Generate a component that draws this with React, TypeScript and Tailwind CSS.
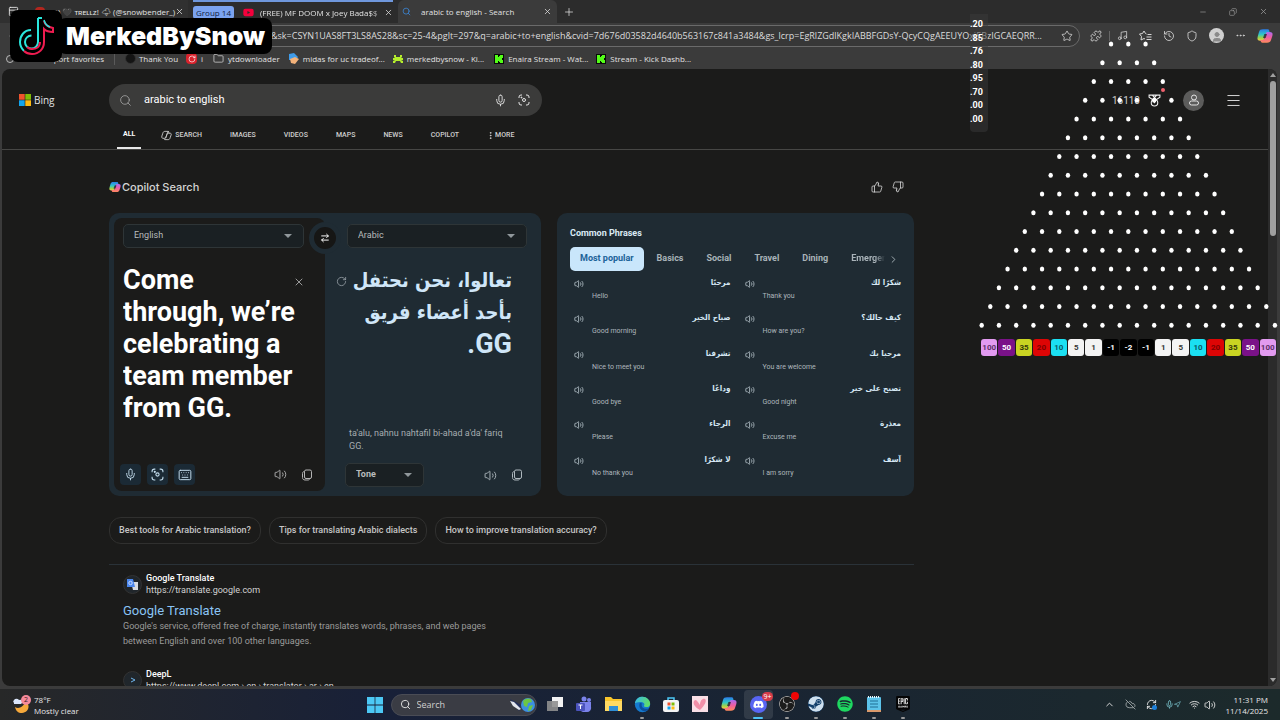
import classNames from 'clsx';
import {
  ArrowLeft,
  ArrowRightLeft,
  ChevronRight,
  ChevronUp,
  CloudOff,
  Copy,
  EllipsisVertical,
  Ellipsis,
  Folder,
  History,
  Keyboard,
  Menu,
  Mic,
  Minus,
  Music,
  Navigation,
  PanelTop,
  Plus,
  Puzzle,
  RefreshCw,
  RotateCw,
  Search,
  Shield,
  Star,
  ThumbsDown,
  ThumbsUp,
  User,
  Volume2,
  Wifi,
  X,
} from 'lucide-react';
import { FC, ReactNode } from 'react';
import { FaDiscord, FaSpotify, FaSteam, FaYoutube } from 'react-icons/fa';
import { SiEpicgames, SiObsstudio } from 'react-icons/si';

const URL_TEXT =
  '&sk=CSYN1UAS8FT3LS8AS28&sc=25-4&pglt=297&q=arabic+to+english&cvid=7d676d03582d4640b563167c841a3484&gs_lcrp=EgRlZGdlKgkIABBFGDsY-QcyCQgAEEUYOxi5BzIGCAEQRR...';

const navItems = ['IMAGES', 'VIDEOS', 'MAPS', 'NEWS', 'COPILOT'];

const categories = ['Basics', 'Social', 'Travel', 'Dining'];

const phrases = [
  { en: 'Hello', ar: 'مرحبًا' },
  { en: 'Thank you', ar: 'شكرًا لك' },
  { en: 'Good morning', ar: 'صباح الخير' },
  { en: 'How are you?', ar: 'كيف حالك؟' },
  { en: 'Nice to meet you', ar: 'تشرفنا' },
  { en: 'You are welcome', ar: 'مرحبا بك' },
  { en: 'Good bye', ar: 'وداعًا' },
  { en: 'Good night', ar: 'تصبح على خير' },
  { en: 'Please', ar: 'الرجاء' },
  { en: 'Excuse me', ar: 'معذرة' },
  { en: 'No thank you', ar: 'لا شكرًا' },
  { en: 'I am sorry', ar: 'آسف' },
];

const suggestions = [
  'Best tools for Arabic translation?',
  'Tips for translating Arabic dialects',
  'How to improve translation accuracy?',
];

const odds = ['.20', '.85', '.76', '.80', '.95', '.70', '.00', '.00'];

const bins = [
  { value: '100', style: 'bg-[#e29af0] text-[#5d2f68]' },
  { value: '50', style: 'bg-[#7a1288] text-white' },
  { value: '35', style: 'bg-[#c9d422] text-[#33380a]' },
  { value: '20', style: 'bg-[#dd0505] text-[#7c0000]' },
  { value: '10', style: 'bg-[#1be0f2] text-[#0b5a66]' },
  { value: '5', style: 'bg-[#f3f3f3] text-[#333]' },
  { value: '1', style: 'bg-[#f3f3f3] text-[#333]' },
  { value: '-1', style: 'bg-black text-white' },
  { value: '-2', style: 'bg-black text-white' },
  { value: '-1', style: 'bg-black text-white' },
  { value: '1', style: 'bg-[#f3f3f3] text-[#333]' },
  { value: '5', style: 'bg-[#f3f3f3] text-[#333]' },
  { value: '10', style: 'bg-[#1be0f2] text-[#0b5a66]' },
  { value: '20', style: 'bg-[#dd0505] text-[#7c0000]' },
  { value: '35', style: 'bg-[#c9d422] text-[#33380a]' },
  { value: '50', style: 'bg-[#7a1288] text-white' },
  { value: '100', style: 'bg-[#e29af0] text-[#5d2f68]' },
];

const CopilotLogo: FC<{ size: number; id: string }> = ({ size, id }) => (
  <svg width={size} height={size} viewBox="0 0 24 24">
    <defs>
      <linearGradient id={`${id}-a`} x1="0" y1="0" x2="0" y2="1">
        <stop offset="0" stopColor="#2b7de9" />
        <stop offset="0.45" stopColor="#2fc6c9" />
        <stop offset="0.75" stopColor="#9bd34a" />
        <stop offset="1" stopColor="#f7c948" />
      </linearGradient>
      <linearGradient id={`${id}-b`} x1="0" y1="0" x2="0" y2="1">
        <stop offset="0" stopColor="#a86bf2" />
        <stop offset="0.5" stopColor="#ef5da0" />
        <stop offset="1" stopColor="#ff8a5c" />
      </linearGradient>
    </defs>
    <path
      d="M9 2h7c1.500 0 2 1 2.500 2.500L19 7h-3c-2 0-3 1-3.500 3l-2 7c-.5 1.500-1 2-2.500 2H5c-4 0-5-2-4-6l2-7c.8-3 2.500-4 6-4z"
      fill={`url(#${id}-a)`}
    />
    <path
      d="M15 22H8c-1.500 0-2-1-2.500-2.500L5 18h3c2 0 3-1 3.500-3l2-7c.5-1.500 1-2 2.500-2h3c4 0 5 2 4 6l-2 6c-.8 3-2.500 4-6 4z"
      fill={`url(#${id}-b)`}
    />
    <path d="M11 9h4l-2 6H9z" fill="#23232b" fillOpacity="0.75" />
  </svg>
);

const CopilotOutline = () => (
  <svg width="11" height="11" viewBox="0 0 24 24" fill="none" stroke="#c8c8c8" strokeWidth="2">
    <path d="M9 3h7l2 5M9 3C6 3 5 4 4 7l-2 6c-1 4 0 5 3 5h3c2 0 2.500-1 3-3l3-9c.5-2 1-3 3-3" />
    <path d="M15 21H8l-2-3M15 21c3 0 4-1 5-4l2-6c1-3 0-4-3-4h-3c-2 0-2.500 1-3 3l-3 8" />
  </svg>
);

const LensIcon: FC<{ size: number }> = ({ size }) => (
  <svg width={size} height={size} viewBox="0 0 24 24" fill="none" stroke="currentColor" strokeWidth="2">
    <path d="M2 8V6a4 4 0 0 1 4-4h2M16 2h2a4 4 0 0 1 4 4v2M22 16v2a4 4 0 0 1-4 4h-2M8 22H6a4 4 0 0 1-4-4v-2" />
    <circle cx="12" cy="12" r="3" />
    <circle cx="7" cy="7" r="1" fill="currentColor" />
  </svg>
);

const CopyPages = () => (
  <svg width="12" height="12" viewBox="0 0 24 24" fill="none" stroke="currentColor" strokeWidth="2">
    <rect x="7" y="2" width="14" height="17" rx="3" />
    <path d="M7 5C4.500 5 3 6.500 3 9v8c0 3 2 5 5 5h6c2 0 3-1 4-3" />
  </svg>
);

const Person = () => (
  <svg width="12" height="12" viewBox="0 0 24 24" fill="none" stroke="currentColor" strokeWidth="2">
    <circle cx="12" cy="7" r="5" />
    <rect x="3" y="14" width="18" height="8" rx="4" />
  </svg>
);

const CollectionsStar = () => (
  <svg width="13" height="12" viewBox="0 0 26 24" fill="none" stroke="currentColor" strokeWidth="2">
    <path d="M15 8l-2-1-3-5-3 5-6 1 4 5-1 7 6-3 2 1M17 9h8M15 14h10M15 19h10" />
  </svg>
);

const Medal = () => (
  <svg width="13" height="13" viewBox="0 0 24 24" fill="none" stroke="#f0f0f0" strokeWidth="2">
    <path d="M2 2h20v4l-6 4H8L2 6zM8 2l7 8M16 2L9 10" />
    <circle cx="12" cy="16" r="6" />
    <path d="M12 13v4" />
  </svg>
);

const KickLogo = () => (
  <svg width="10" height="10" viewBox="0 0 10 10">
    <rect width="10" height="10" fill="#0a0a0a" />
    <path d="M1 1h3v2h1V2h1V1h3v3H8v2h1v3H6V8H5V7H4v2H1z" fill="#53fc18" />
  </svg>
);

const Alien = () => (
  <svg width="10" height="10" viewBox="0 0 10 10" fill="#b5ee2c">
    <path d="M1 1h2v2h4V1h2v2L8 4h2v2H8l2 1v2H8L7 7H3L2 9H0V7l2-1H0V4h2L1 3z" />
  </svg>
);

const TikTokLogo = () => (
  <svg width="36" height="40" viewBox="0 0 36 40" fill="none">
    <path
      d="M20 2v24a6.500 6.500 0 1 1-6.500-6.500M20 2h4"
      stroke="#29e6dd"
      strokeWidth="2"
    />
    <path d="M13 14C6 14 2 20 2 26c0 4 1 6 4 9" stroke="#29e6dd" strokeWidth="2" />
    <path d="M26 5c1 4 4 6 9 7v4c-4 0-7-1-9-3v13c0 7-5 12-12 12-3 0-6-1-8-3" stroke="#f01c50" strokeWidth="2" />
    <path d="M22 26c0 5-4 7-8 7-2 0-4-1-5-2" stroke="#f01c50" strokeWidth="2" />
    <path d="M26 4c1 4 3 6 6 7" stroke="#29e6dd" strokeWidth="1.500" />
  </svg>
);

const Weather = () => (
  <svg width="18" height="20" viewBox="0 0 18 20">
    <path d="M3 12c3 2 8 1 11-6 5 5 2 12-4 12-4 0-6-2-7-6z" fill="#f6a93b" />
    <path d="M2 8a2 2 0 0 1 0-3 3 3 0 0 1 5 0 2 2 0 0 1 2 4H2z" fill="#dbe6fb" />
  </svg>
);

const EdgeLogo = () => (
  <svg width="17" height="17" viewBox="0 0 20 20">
    <defs>
      <linearGradient id="edge" x1="0" y1="0" x2="1" y2="0.3">
        <stop offset="0" stopColor="#35b8f0" />
        <stop offset="1" stopColor="#5fdc6c" />
      </linearGradient>
    </defs>
    <circle cx="10" cy="10" r="9" fill="#1579ce" />
    <path d="M1 9C2 3 6 1 10 1c5 0 9 4 9 8 0 3-2 4-5 4-2 0-3-1-2-2 1-2-1-4-4-4-4 0-6 1-7 2z" fill="url(#edge)" />
    <path d="M7 8c-2 4 0 9 5 10 3 0 5-2 6-4-4 2-9 1-9-3 0-1 0-2 1-2z" fill="#0c4f9c" />
  </svg>
);

const WindowsLogo = () => (
  <svg width="16" height="16" viewBox="0 0 16 16" fill="#4cc8f5">
    <path d="M0 0h7.600v7.600H0zM8.400 0H16v7.600H8.400zM0 8.400h7.600V16H0zM8.400 8.400H16V16H8.400z" />
  </svg>
);

const FourSquares: FC<{ size: number }> = ({ size }) => (
  <svg width={size} height={size} viewBox="0 0 12 12">
    <path d="M0 0h5.700v5.700H0z" fill="#f0532d" />
    <path d="M6.300 0H12v5.700H6.300z" fill="#80bc06" />
    <path d="M0 6.300h5.700V12H0z" fill="#12a5ee" />
    <path d="M6.300 6.300H12V12H6.300z" fill="#fdba12" />
  </svg>
);

const SearchArt = () => (
  <svg width="28" height="18" viewBox="0 0 28 18">
    <path d="M2 3l11 6-2 6z" fill="#23305c" />
    <path d="M2 5l4 1 7 7-2 1-6-4z" fill="#e3e6ee" />
    <circle cx="20" cy="9" r="7" fill="#3d8fe0" />
    <path d="M15 5c2-3 6-3 8-2l1 3-4 1-1 4-3-1zM21 10l4-1-2 5-3 1z" fill="#6cc644" />
  </svg>
);

const TrayMicLocation = () => (
  <span className="flex items-center text-[#7cc5cf]">
    <Mic size={9} />
    <Navigation size={7} />
  </span>
);

const ChromeBar: FC = () => (
  <header className="bg-[#3b3b3b] font-['Open_Sans',sans-serif] text-[8px] text-[#e2e2e2]">
    <div className="flex h-[23px] items-stretch bg-[#2c2c2c]">
      <div className="flex w-[188px] items-center bg-[#303030] pl-2">
        <PanelTop size={11} className="mr-4 shrink-0" />
        <span className="h-2.5 w-2.5 shrink-0 rounded-sm bg-[#b3261e]" />
        <span className="ml-1.5 flex-1 whitespace-nowrap">(4) 🖤 ᴛʀᴇʟʟᴢ! 🌩 (@snowbender_)</span>
        <button aria-label="Close tab" className="mr-1">
          <X size={9} />
        </button>
      </div>
      <div className="ml-[5px] flex w-[200px] items-center border-t-2 border-[#6f97dc]">
        <button className="h-[13px] w-[41px] whitespace-nowrap rounded-[3px] bg-[#7ba3ef] leading-[13px] text-[#10203f]">
          Group 14
        </button>
        <FaYoutube size={11} className="ml-[9px] shrink-0 text-[#f5003c]" />
        <span className="ml-1.5 flex-1 whitespace-nowrap mask-r-from-90%">(FREE) MF DOOM x Joey Bada$$</span>
        <button aria-label="Close tab">
          <X size={9} />
        </button>
      </div>
      <div className="ml-[5px] flex w-[159px] items-center rounded-t-md bg-[#3b3b3b] pl-1 pr-[5px]">
        <Search size={9} className="text-[#3b8be0]" />
        <span className="ml-2.5 flex-1 whitespace-nowrap">arabic to english - Search</span>
        <button aria-label="Close tab">
          <X size={9} />
        </button>
      </div>
      <button aria-label="New tab" className="ml-1.5">
        <Plus size={12} strokeWidth={1.500} />
      </button>
      <div className="ml-auto flex items-center gap-[22px] pr-3 text-[#9a9a9a]">
        <button aria-label="Minimize">
          <Minus size={8} />
        </button>
        <button aria-label="Restore">
          <Copy size={8} className="-scale-x-100" />
        </button>
        <button aria-label="Close">
          <X size={9} />
        </button>
      </div>
    </div>
    <div className="flex h-[25px] items-center pl-2 pr-[7px]">
      <button aria-label="Back">
        <ArrowLeft size={10} />
      </button>
      <div className="ml-[60px] flex h-[22px] flex-1 items-center rounded-full border border-[#6a6a6a] bg-[#373737] pl-[192px] pr-1.5">
        <input
          aria-label="Address"
          readOnly
          value={URL_TEXT}
          className="min-w-0 flex-1 bg-transparent text-[9px] text-[#dcdcdc] outline-none"
        />
        <Star size={12} strokeWidth={1.500} className="ml-2.5" />
      </div>
      <div className="ml-2.5 flex items-center gap-[11px] text-[#d6d6d6]">
        <Puzzle size={12} strokeWidth={1.700} />
        <span className="-mx-1 h-2.5 w-px bg-[#666]" />
        <Music size={11} strokeWidth={1.700} />
        <CollectionsStar />
        <History size={12} strokeWidth={1.700} />
        <Shield size={12} strokeWidth={1.700} />
        <span className="flex h-[15px] w-[15px] items-end justify-center overflow-hidden rounded-full bg-[#d0d0d0]">
          <User size={12} fill="#8a8a8a" stroke="#8a8a8a" />
        </span>
        <Ellipsis size={11} />
        <CopilotLogo size={16} id="toolbar" />
      </div>
    </div>
    <nav className="flex h-[21px] items-center whitespace-nowrap pl-1.5">
      <span className="h-2 w-2 rounded-full border border-[#bbb]" />
      <a href="#import" className="ml-[30px]">
        Import favorites
      </a>
      <span className="mx-2.5 h-3 w-px bg-[#5a5a5a]" />
      <a href="#thanks" className="flex items-center gap-[3px]">
        <span className="h-[11px] w-[11px] rounded-full border border-[#333] bg-[#141414]" />
        Thank You
      </a>
      <a href="#i" className="ml-2 flex items-center gap-1">
        <span className="flex h-[11px] w-[11px] items-center justify-center rounded-sm bg-[#d8222c] text-white">
          <RotateCw size={8} />
        </span>
        i
      </a>
      <a href="#yt" className="ml-2.5 flex items-center gap-1">
        <Folder size={11} strokeWidth={1.500} />
        ytdownloader
      </a>
      <a href="#midas" className="ml-2 flex items-center gap-1">
        <svg width="11" height="11" viewBox="0 0 11 11">
          <path d="M1 1l5-1 4 4-2 3-7 0z" fill="#3f9be8" />
          <path d="M2 6l5-2 4 2-4 5-4-1z" fill="#f3b27a" />
        </svg>
        midas for uc tradeof...
      </a>
      <a href="#merked" className="ml-2 flex items-center gap-1">
        <Alien />
        merkedbysnow - Ki...
      </a>
      <a href="#enaira" className="ml-2.5 flex items-center gap-1">
        <KickLogo />
        Enaira Stream - Wat...
      </a>
      <a href="#dash" className="ml-2 flex items-center gap-1">
        <KickLogo />
        Stream - Kick Dashb...
      </a>
    </nav>
  </header>
);

const BingHeader: FC = () => (
  <div className="border-b border-[#474745] pt-[15px]">
    <div className="flex items-center pl-[17px] pr-[26px]">
      <a href="#bing" className="flex w-[90px] items-center gap-[3px] font-['Open_Sans',sans-serif] text-[10px]">
        <FourSquares size={12} />
        Bing
      </a>
      <form className="flex h-8 w-[433px] items-center rounded-full bg-[#3b3b3a] pl-2.5 pr-3">
        <Search size={13} strokeWidth={1.500} className="text-[#a5a5a5]" />
        <input
          aria-label="Search"
          defaultValue="arabic to english"
          className="ml-3 min-w-0 flex-1 bg-transparent text-[11px] text-white outline-none"
        />
        <button type="button" aria-label="Voice search">
          <Mic size={13} strokeWidth={1.700} />
        </button>
        <button type="button" aria-label="Image search" className="ml-[11px]">
          <LensIcon size={12} />
        </button>
      </form>
      <div className="ml-auto flex items-center">
        <span className="text-[10px] text-[#d0d0d0]">16110</span>
        <span className="relative ml-2">
          <Medal />
          <span className="absolute -right-1 -top-1.5 h-1 w-1 rounded-full bg-[#f0616d]" />
        </span>
        <button
          aria-label="Account"
          className="ml-[22px] flex h-[21px] w-[21px] items-center justify-center rounded-full bg-[#5c5c5b]"
        >
          <Person />
        </button>
        <button aria-label="Menu" className="ml-[21px]">
          <Menu size={17} strokeWidth={1.300} />
        </button>
      </div>
    </div>
    <nav className="flex h-[33px] items-center gap-7 pl-[115px] text-[7px] font-medium text-[#cfcfcf]">
      <a
        href="#all"
        className="-mr-2 flex h-full items-center border-b-2 border-[#e8e8e8] px-1.5 pt-1.5 font-bold text-white"
      >
        ALL
      </a>
      <a href="#search" className="flex items-center gap-[3px] pt-[5px]">
        <CopilotOutline />
        SEARCH
      </a>
      {navItems.map((item) => (
        <a key={item} href="#nav" className="pt-[5px]">
          {item}
        </a>
      ))}
      <button className="-ml-px flex items-center pt-[5px]">
        <EllipsisVertical size={9} strokeWidth={2.500} />
        MORE
      </button>
    </nav>
  </div>
);

const LanguageSelect: FC<{ label: string; value: string; className: string }> = ({
  label,
  value,
  className,
}) => (
  <div className={classNames('relative text-[9px]', className)}>
    <select
      aria-label={label}
      className="h-6 w-full appearance-none rounded-[5px] border border-[#2e3537] bg-[#1a2023] px-2.5 text-[#b9bcbd] outline-none"
    >
      <option>{value}</option>
    </select>
    <svg width="8" height="4" viewBox="0 0 8 4" className="absolute right-3 top-2.5 fill-[#90979b]">
      <path d="M0 0h8L4 4z" />
    </svg>
  </div>
);

const ToolButton: FC<{ label: string; children: ReactNode }> = ({ label, children }) => (
  <button
    aria-label={label}
    className="flex h-[21px] w-[21px] items-center justify-center rounded bg-[#1b2a35] text-[#c3dcec]"
  >
    {children}
  </button>
);

const Translator: FC = () => (
  <section className="relative flex h-[283px] w-[432px] shrink-0 rounded-[10px] bg-[#1f2b33] p-[5px]">
    <div className="flex w-[211px] shrink-0 flex-col rounded-lg bg-[#1b1b1a] p-1.5">
      <LanguageSelect label="From" value="English" className="ml-[3px] w-[181px]" />
      <div className="ml-[3px] mt-4 flex flex-1 items-start">
        <textarea
          aria-label="Source text"
          readOnly
          className="h-full w-[174px] resize-none overflow-hidden bg-transparent text-[27px] font-bold leading-8 text-white outline-none"
          value="Come through, we’re celebrating a team member from GG."
        />
        <button aria-label="Clear" className="-ml-1 mt-3">
          <X size={12} strokeWidth={1.700} className="text-[#b0b0b0]" />
        </button>
      </div>
      <div className="flex items-center gap-1.5 pr-1.5 text-[#b4b4b4]">
        <ToolButton label="Speak">
          <Mic size={13} strokeWidth={1.700} />
        </ToolButton>
        <ToolButton label="Scan">
          <LensIcon size={13} />
        </ToolButton>
        <ToolButton label="Keyboard">
          <Keyboard size={14} strokeWidth={1.700} />
        </ToolButton>
        <button aria-label="Listen" className="ml-auto mr-2">
          <Volume2 size={13} strokeWidth={1.700} />
        </button>
        <button aria-label="Copy">
          <CopyPages />
        </button>
      </div>
    </div>
    <div className="flex min-w-0 flex-1 flex-col pb-1 pl-[11px] pr-1 pt-1.5">
      <LanguageSelect label="To" value="Arabic" className="ml-[11px] w-[180px]" />
      <div className="mt-4 flex flex-1 items-start pr-5">
        <button aria-label="Regenerate" className="mt-3">
          <RotateCw size={11} strokeWidth={1.700} className="text-[#9aa4aa]" />
        </button>
        <p
          dir="rtl"
          lang="ar"
          className="flex-1 whitespace-nowrap font-['DejaVu_Sans_Condensed','DejaVu_Sans',sans-serif] text-xl font-bold leading-8 text-[#cfe6f8]"
        >
          تعالوا، نحن نحتفل
          <br />
          بأحد أعضاء فريق
          <br />
          <span className="font-[Roboto,sans-serif] text-[27px]">GG.</span>
        </p>
      </div>
      <p className="mb-2.5 w-[170px] pl-[13px] text-[9px] leading-[13px] text-[#a6adb1]">
        ta'alu, nahnu nahtafil bi-ahad a'da' fariq GG.
      </p>
      <div className="flex items-center pl-[9px] pr-[9px] text-[#aeb8be]">
        <LanguageSelect label="Tone" value="Tone" className="w-[79px] font-bold" />
        <button aria-label="Listen" className="ml-auto mr-3.5">
          <Volume2 size={13} strokeWidth={1.700} />
        </button>
        <button aria-label="Copy">
          <CopyPages />
        </button>
      </div>
    </div>
    <button
      aria-label="Swap languages"
      className="absolute left-[200px] top-[9px] flex h-8 w-8 items-center justify-center rounded-full border-[5px] border-[#1f2b33] bg-[#161615] text-white"
    >
      <ArrowRightLeft size={10} strokeWidth={2.300} />
    </button>
  </section>
);

const CommonPhrases: FC = () => (
  <section className="flex h-[283px] w-[357px] flex-col rounded-[10px] bg-[#1f2b33] px-[13px] pt-3.5">
    <h2 className="text-[9px] font-bold leading-3 text-[#dbeaf5]">Common Phrases</h2>
    <div className="mt-2 flex h-6 items-center gap-[23px] text-[9px] font-bold text-[#a9b3b9]">
      <button className="-mr-2.5 h-full whitespace-nowrap rounded-[5px] bg-[#c9e6fb] px-2.5 text-[#1b6298]">
        Most popular
      </button>
      {categories.map((item) => (
        <button key={item}>{item}</button>
      ))}
      <button className="min-w-0 flex-1 overflow-hidden text-left mask-r-from-70%">Emergency</button>
      <button aria-label="More categories" className="-ml-5 mr-0.5">
        <ChevronRight size={11} />
      </button>
    </div>
    <ul className="mt-1 grid h-[212px] grid-cols-2 grid-rows-6 gap-x-2.5">
      {phrases.map((phrase) => (
        <li key={phrase.en} className="grid grid-cols-[22px_1fr] content-start pt-0.5">
          <button aria-label={`Listen to ${phrase.en}`} className="row-span-2 h-3.5 pl-1">
            <Volume2 size={10} className="text-[#b3c0c8]" />
          </button>
          <span
            dir="rtl"
            lang="ar"
            className="font-['DejaVu_Sans_Condensed','DejaVu_Sans',sans-serif] text-[8px] font-bold leading-3 text-[#d5e7f4]"
          >
            {phrase.ar}
          </span>
          <span className="text-[7px] leading-[15px] text-[#adb6bc]">{phrase.en}</span>
        </li>
      ))}
    </ul>
  </section>
);

const SiteHead: FC<{ name: string; url: string; icon: ReactNode }> = ({ name, url, icon }) => (
  <div className="flex items-center gap-1 text-[9px] leading-3 text-[#d2d2d2]">
    <span className="flex h-[19px] w-[19px] items-center justify-center rounded-full border border-[#333] bg-[#20262b]">
      {icon}
    </span>
    <div>
      <div className="font-medium text-white">{name}</div>
      <div>{url}</div>
    </div>
  </div>
);

const Results: FC = () => (
  <main className="ml-[107px] w-[805px] pt-[29px]">
    <div className="flex h-4 items-center gap-px">
      <CopilotLogo size={12} id="heading" />
      <h1 className="font-[Inter,sans-serif] text-[11px] font-medium text-[#d4d4d4]">Copilot Search</h1>
      <button aria-label="Like" className="ml-auto">
        <ThumbsUp size={12} strokeWidth={1.500} />
      </button>
      <button aria-label="Dislike" className="ml-2 mr-2.5">
        <ThumbsDown size={12} strokeWidth={1.500} />
      </button>
    </div>
    <div className="mt-[18px] flex gap-4">
      <Translator />
      <CommonPhrases />
    </div>
    <div className="mt-[21px] flex gap-2">
      {suggestions.map((text) => (
        <button
          key={text}
          className="h-[27px] whitespace-nowrap rounded-xl border border-[#30302f] px-[9px] text-[9px] font-medium text-[#c6c6c6]"
        >
          {text}
        </button>
      ))}
    </div>
    <ol className="mt-5 border-t border-[#2a3238] pl-3.5 pt-[7px]">
      <li>
        <SiteHead
          name="Google Translate"
          url="https://translate.google.com"
          icon={
            <svg width="11" height="11" viewBox="0 0 11 11">
              <path d="M4 3h7v8H6z" fill="#d7dbe2" />
              <path d="M0 0h6l2 8H0z" fill="#4a86ee" />
              <circle cx="3.500" cy="4" r="1.700" fill="none" stroke="#c9dcff" />
            </svg>
          }
        />
        <h2 className="mt-[7px] text-[13px] leading-4 text-[#8ac4f5]">
          <a href="#google">Google Translate</a>
        </h2>
        <p className="w-[380px] text-[9px] leading-[15px] text-[#9c9c9b]">
          Google's service, offered free of charge, instantly translates words, phrases, and web pages between English
          and over 100 other languages.
        </p>
      </li>
      <li className="mt-[19px]">
        <SiteHead
          name="DeepL"
          url="https://www.deepl.com › en › translator › ar › en"
          icon={
            <svg width="6" height="6" viewBox="0 0 6 6" stroke="#6fb6ee" fill="none">
              <path d="M1 1l4 2-4 2" />
            </svg>
          }
        />
      </li>
    </ol>
  </main>
);

const Scrollbar = () => (
  <div className="flex w-[9px] flex-col items-center bg-[#2b2b2b] py-1">
    <svg width="6" height="4" viewBox="0 0 6 4" fill="#a0a0a0">
      <path d="M3 0l3 4H0z" />
    </svg>
    <div className="mt-1 h-[155px] w-1.5 rounded-full bg-[#a0a0a0]" />
    <svg width="6" height="4" viewBox="0 0 6 4" fill="#a0a0a0" className="mt-auto">
      <path d="M0 0h6L3 4z" />
    </svg>
  </div>
);

const taskbarApps: { name: string; icon: ReactNode; state?: 'open' | 'active' }[] = [
  {
    name: 'Task view',
    icon: (
      <svg width="16" height="16" viewBox="0 0 16 16">
        <path d="M5 1h11v10H5z" fill="#f2f2f2" />
        <path d="M0 5h11v10H0z" fill="#8f8f8f" fillOpacity="0.9" />
      </svg>
    ),
  },
  {
    name: 'Teams',
    icon: (
      <svg width="16" height="17" viewBox="0 0 16 17" fill="#7b83eb">
        <circle cx="8" cy="3" r="2.500" />
        <circle cx="13" cy="4" r="2" />
        <path d="M4 6h11v5a4 4 0 0 1-4 5H7a4 4 0 0 1-3-4z" />
        <rect y="7" width="9" height="8" rx="1" fill="#4b53bc" />
        <path d="M2.500 9h4M4.500 9v4" stroke="#fff" />
      </svg>
    ),
  },
  {
    name: 'File Explorer',
    icon: (
      <svg width="17" height="16" viewBox="0 0 17 16">
        <path d="M0 1h6l2 2h9v12H0z" fill="#f8c52c" />
        <path d="M0 5h17v10H0z" fill="#ffda63" />
        <path d="M4 10h9v5H4z" fill="#2f8fd8" />
      </svg>
    ),
  },
  { name: 'Edge', icon: <EdgeLogo />, state: 'open' },
  {
    name: 'Store',
    icon: (
      <svg width="16" height="17" viewBox="0 0 16 17">
        <path d="M5 5V2h6v3" fill="none" stroke="#4cc8f5" strokeWidth="1.500" />
        <rect y="4" width="16" height="12" rx="2" fill="#f4f4f4" />
        <path d="M4.500 6.500h3v3h-3z" fill="#f0532d" />
        <path d="M8.500 6.500h3v3h-3z" fill="#80bc06" />
        <path d="M4.500 10.500h3v3h-3z" fill="#12a5ee" />
        <path d="M8.500 10.500h3v3h-3z" fill="#fdba12" />
      </svg>
    ),
  },
  {
    name: 'Hearts',
    icon: (
      <svg width="16" height="16" viewBox="0 0 16 16">
        <path d="M0 0h16v16H0z" fill="#f9dfe6" />
        <path d="M8 14C2 11 0 6 3 4c2 0 3 2 5 5 0-5 3-7 5-6 2 2 0 6-5 11z" fill="#f08fa8" />
      </svg>
    ),
  },
  { name: 'Copilot', icon: <CopilotLogo size={16} id="taskbar" /> },
  {
    name: 'Discord',
    state: 'active',
    icon: (
      <span className="relative flex h-[17px] w-[17px] items-center justify-center rounded-full bg-[#5865f2]">
        <FaDiscord size={11} color="#fff" />
        <span className="absolute -right-1.5 -top-1 rounded-full bg-[#d63c48] px-px text-[7px] leading-[9px] text-white">
          9+
        </span>
      </span>
    ),
  },
  {
    name: 'OBS Studio',
    state: 'open',
    icon: (
      <span className="relative">
        <SiObsstudio size={16} color="#c4c4c4" className="rounded-full bg-[#1c1c1c]" />
        <span className="absolute -right-1 -top-1 h-2 w-2 rounded-full bg-[#f00505]" />
      </span>
    ),
  },
  { name: 'Steam', icon: <FaSteam size={16} color="#cfe0ee" className="rounded-full bg-[#123f6b]" />, state: 'open' },
  { name: 'Spotify', icon: <FaSpotify size={16} color="#1ed760" />, state: 'open' },
  {
    name: 'Notepad',
    state: 'open',
    icon: (
      <svg width="14" height="16" viewBox="0 0 14 16">
        <rect y="1" width="14" height="15" rx="1" fill="#5cc3ea" />
        <path d="M1 1h12" stroke="#e8f6fc" strokeWidth="2" strokeDasharray="1 1" />
        <path d="M3 5h8M3 8h8M3 11h8" stroke="#1f6f96" />
        <path d="M0 14h14v2H0z" fill="#d99a6c" />
      </svg>
    ),
  },
  {
    name: 'Epic Games',
    state: 'open',
    icon: (
      <span className="relative flex h-4 w-4 items-center justify-center">
        {/* light backing sits inside the shield so only the cut-outs show it */}
        <span className="absolute inset-x-[3px] bottom-[3px] top-px bg-[#e8e8e8]" />
        <SiEpicgames size={16} color="#050505" className="relative" />
      </span>
    ),
  },
];

const Taskbar: FC = () => (
  <footer className="grid h-[31px] grid-cols-[1fr_auto_1fr] items-center bg-linear-to-r from-[#272828] via-[#182038] via-30% to-[#1c2a2b] font-['Open_Sans',sans-serif] text-[8px] text-[#e6e6e6]">
    <div className="flex items-center gap-1 pl-3">
      <span className="relative">
        <Weather />
        <span className="absolute -right-px top-0 h-2.5 w-2.5 rounded-full bg-[#f58a9b] text-center text-[7px] leading-[10px] text-[#3a1a20]">
          2
        </span>
      </span>
      <div className="leading-[11px]">
        <div>78°F</div>
        <div>Mostly clear</div>
      </div>
    </div>
    <div className="flex h-full items-center pl-1">
      <button aria-label="Start" className="mr-2">
        <WindowsLogo />
      </button>
      <label className="mr-1 flex h-[22px] w-[146px] items-center rounded-full border border-[#4a4c55] bg-[#3a3c44] pl-2">
        <Search size={11} />
        <input
          aria-label="Search apps"
          placeholder="Search"
          className="ml-1.5 min-w-0 flex-1 bg-transparent text-[9px] outline-none placeholder:text-[#cfcfcf]"
        />
        <SearchArt />
      </label>
      {taskbarApps.map((app) => (
        <button
          key={app.name}
          aria-label={app.name}
          className={classNames('flex h-[29px] w-[29px] flex-col items-center justify-between rounded pt-1.5', {
            'bg-white/10': app.state === 'active',
          })}
        >
          {app.icon}
          <span
            className={classNames('h-0.5 rounded-full', {
              'w-2.5 bg-[#4cc2f5]': app.state === 'active',
              'w-1 bg-[#9a9a9a]': app.state === 'open',
            })}
          />
        </button>
      ))}
    </div>
    <div className="flex items-center justify-end pr-3">
      <ChevronUp size={11} />
      <CloudOff size={11} className="ml-2.5 text-[#9aa2a3]" />
      <span className="relative ml-2.5">
        <RefreshCw size={11} />
        <span className="absolute bottom-0 right-0 h-[5px] w-[5px] rounded-full bg-[#1d7fd8]" />
      </span>
      <span className="ml-2">
        <TrayMicLocation />
      </span>
      <Wifi size={11} className="ml-2" />
      <Volume2 size={12} strokeWidth={1.700} className="ml-1" />
      <div className="ml-2.5 text-right leading-[11px]">
        <div>11:31 PM</div>
        <div>11/14/2025</div>
      </div>
    </div>
  </footer>
);

const PlinkoBoard: FC = () => (
  <div className="pointer-events-none absolute right-1 top-[38px] w-[295px]">
    <svg viewBox="0 0 295 294" className="block w-full overflow-visible" fill="#fff">
      {Array.from({ length: 16 }, (_, row) =>
        Array.from({ length: row + 3 }, (_, i) => (
          <ellipse
            key={`${row}-${i}`}
            cx={147.3 + (i - (row + 2) / 2) * 17.25}
            cy={6 + row * 18.75}
            rx="2.200"
            ry="2.500"
          />
        )),
      )}
    </svg>
    <div className="mt-[7px] flex gap-px">
      {bins.map((bin, i) => (
        <span
          key={i}
          className={classNames(
            'h-[17px] min-w-0 flex-1 rounded-[3px] text-center text-[8px] font-bold leading-[17px]',
            bin.style,
          )}
        >
          {bin.value}
        </span>
      ))}
    </div>
  </div>
);

const OddsColumn: FC = () => (
  <div className="pointer-events-none absolute right-[292px] top-3.5 h-[118px] w-[18px] rounded-b bg-[#3a3a3a]/50 pt-1 text-[9px] font-bold text-white">
    <div className="flex h-[107px] flex-col justify-between leading-3">
      {odds.map((value, i) => (
        <span key={i}>{value}</span>
      ))}
    </div>
  </div>
);

const Watermark: FC = () => (
  <div className="pointer-events-none absolute left-2.5 top-2.5 flex items-center">
    <div className="flex h-[52px] w-[52px] items-center justify-center rounded-lg bg-black">
      <TikTokLogo />
    </div>
    <div className="-ml-1 h-9 rounded-lg bg-black pl-2 pr-[7px] font-[Inter,sans-serif] text-[25px] font-black leading-9 text-white">
      MerkedBySnow
    </div>
  </div>
);

const App: FC = () => (
  <div className="relative flex h-screen flex-col overflow-hidden bg-[#3b3b3b] font-[Roboto,sans-serif] text-[#e4e4e4]">
    <ChromeBar />
    <div className="mb-[3px] ml-0.5 mr-[3px] flex min-h-0 flex-1 overflow-hidden rounded-lg bg-[#1b1b1a]">
      <div className="min-w-0 flex-1 overflow-hidden">
        <BingHeader />
        <Results />
      </div>
      <Scrollbar />
    </div>
    <Taskbar />
    <PlinkoBoard />
    <OddsColumn />
    <Watermark />
  </div>
);

export default App;
